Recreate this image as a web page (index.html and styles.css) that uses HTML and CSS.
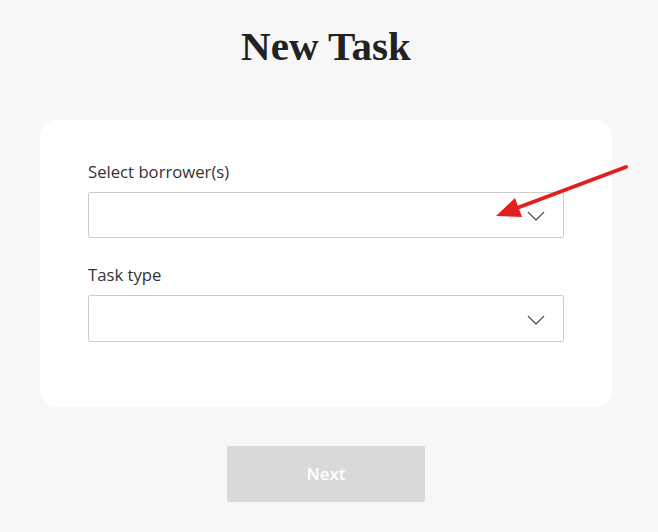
FILE: index.html
```html
<!DOCTYPE html>
<html lang="en">
<head>
<meta charset="utf-8">
<title>New Task</title>
<link rel="stylesheet" href="styles.css">
</head>
<body>
<div class="page">
  <h1 class="title">New Task</h1>
  <form class="card">
    <div class="field">
      <label class="label">Select borrower(s)</label>
      <div class="select">
        <svg class="chev" width="18" height="10" viewBox="0 0 18 10"><path d="M1 1 L9 9 L17 1" fill="none" stroke="#555" stroke-width="1.3"/></svg>
      </div>
    </div>
    <div class="field">
      <label class="label">Task type</label>
      <div class="select">
        <svg class="chev" width="18" height="10" viewBox="0 0 18 10"><path d="M1 1 L9 9 L17 1" fill="none" stroke="#555" stroke-width="1.3"/></svg>
      </div>
    </div>
  </form>
  <div class="actions">
    <button class="btn" type="button">Next</button>
  </div>
</div>
<svg class="annot" width="658" height="532" viewBox="0 0 658 532">
  <line x1="626" y1="167" x2="517" y2="208" stroke="#e31e1e" stroke-width="4" stroke-linecap="round"/>
  <polygon points="496,216 522,217 515,198" fill="#e31e1e"/>
</svg>
</body>
</html>
```
FILE: styles.css
```css
html, body {
  margin: 0;
  padding: 0;
  background: #f7f7f7;
}
body {
  width: 658px;
  height: 532px;
  overflow: hidden;
  position: relative;
  font-family: "Open Sans", "Liberation Sans", sans-serif;
}
.page {
  width: 572px;
  margin-left: 40px;
  padding-top: 22px;
}
.title {
  margin: 0 0 50px;
  text-align: center;
  font-family: "Liberation Serif", "DejaVu Serif", serif;
  font-weight: 700;
  font-size: 41px;
  line-height: 48px;
  color: #222;
}
.card {
  background: #fff;
  border-radius: 16px;
  padding: 40px 48px 65px;
  display: flex;
  flex-direction: column;
  gap: 25px;
}
.field {
  display: flex;
  flex-direction: column;
}
.label {
  font-size: 16.7px;
  line-height: 24px;
  color: #333;
  margin-bottom: 8px;
}
.select {
  height: 46px;
  box-sizing: border-box;
  border: 1px solid #cdcdcd;
  border-radius: 2px;
  display: flex;
  align-items: center;
  justify-content: flex-end;
  padding-right: 18px;
}
.field + .field .select {
  height: 47px;
}
.chev {
  display: block;
  margin-top: 2px;
}
.actions {
  display: flex;
  justify-content: center;
  padding-top: 39px;
}
.btn {
  width: 198px;
  height: 56px;
  padding: 0 0 2px;
  border: none;
  border-radius: 2px;
  background: #d9d9d9;
  color: #fff;
  font-family: "Open Sans", "Liberation Sans", sans-serif;
  font-weight: 600;
  font-size: 17px;
}
.annot {
  position: absolute;
  left: 0;
  top: 0;
  pointer-events: none;
}
```
